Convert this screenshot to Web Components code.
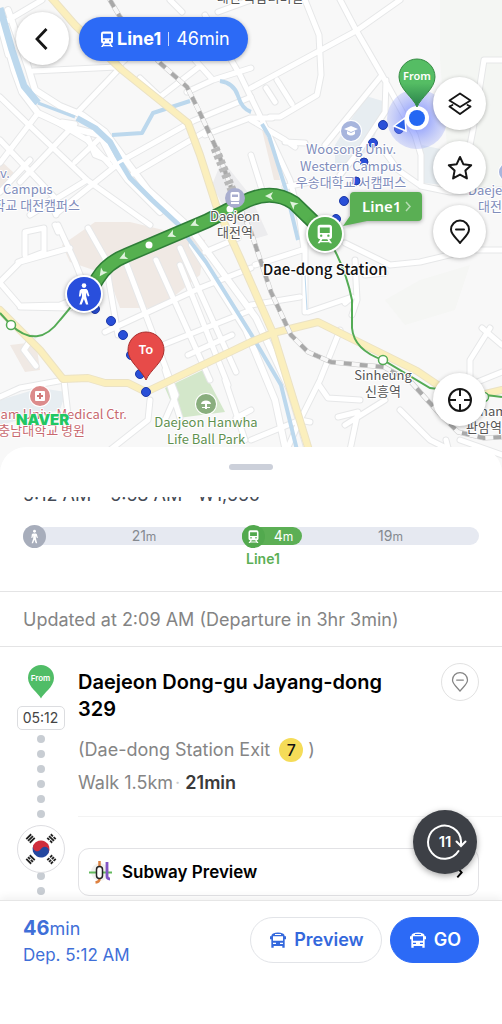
<!DOCTYPE html>
<html lang="en">
<head>
<meta charset="utf-8">
<meta name="viewport" content="width=device-width, initial-scale=1">
<title>Route to destination</title>
<style>
  html, body { margin: 0; height: 100%; background: #fff; }
  body { font-family: Inter, "Noto Sans CJK KR", sans-serif; color: #000; }
</style>
</head>
<body>
<transit-app></transit-app>
<script>
const define = (name, html, setup) => {
  const template = document.createElement('template');
  template.innerHTML = html;
  customElements.define(name, class extends HTMLElement {
    connectedCallback() {
      if (this.shadowRoot) return;
      this.attachShadow({ mode: 'open' }).append(template.content.cloneNode(true));
      if (setup) setup(this, this.shadowRoot);
    }
  });
};

const ICONS = {
  back: '<path d="M15.500 2 6 12l9.500 10" fill="none" stroke="currentColor" stroke-width="2.800"/>',
  layers: '<g fill="none" stroke="currentColor" stroke-width="1.900" stroke-linejoin="round" stroke-linecap="round"><path d="M12 1.500 22.500 8.500 12 15 1.500 8.500Z"/><path d="m1.500 14.500 3-1.500M22.500 14.500l-3-1.500M1.500 14.500 12 22l10.500-7.500"/></g>',
  star: '<path d="m12 1 3.300 7.200 7.900 1-5.800 5.400 1.500 7.800-6.900-3.800-6.900 3.800 1.500-7.800L.8 9.200l7.900-1Z" fill="none" stroke="currentColor" stroke-width="2" stroke-linejoin="round"/>',
  pin: '<path d="M12 23C9.500 19 3 14.800 3 9.600a9 9 0 0 1 18 0c0 5.200-6.500 9.400-9 13.400ZM8 9.600h8" fill="none" stroke="currentColor" stroke-width="var(--line, 2)" stroke-linejoin="round" stroke-linecap="round"/>',
  target: '<g fill="none" stroke="currentColor" stroke-width="2"><circle cx="12" cy="12" r="11"/><path d="M12 1v7M12 16v7M1 12h7M16 12h7"/></g>',
  walk: '<g fill="currentColor"><circle cx="12" cy="3.600" r="2.300"/><path d="M9.300 7h5.200l1.300 1.500 1.600 5.400-1.500.7-1.700-4v4l2.100 8H14L11.900 17l-2.200 5.600H7.400L9.900 15v-4.500L8.500 14.500H6.900l.8-6Z"/></g>',
  train: '<path fill="currentColor" fill-rule="evenodd" d="M7 2h10a3 3 0 0 1 3 3v10a3 3 0 0 1-3 3H7a3 3 0 0 1-3-3V5a3 3 0 0 1 3-3Zm-.5 3v6h11V5Zm1.500 7.800a1.300 1.300 0 1 0 0 2.600 1.300 1.300 0 0 0 0-2.600Zm8 0a1.300 1.300 0 1 0 0 2.600 1.300 1.300 0 0 0 0-2.600ZM7 18h2.200l-1 2h7.600l-1-2H17l3 4.500h-2.400l-.7-1H7.100l-.7 1H4Z"/>',
  bus: '<path fill="currentColor" fill-rule="evenodd" d="M4 2.500Q12-1 20 2.500Q22 3.500 22 6.500H24V11H22V23.500H18.500V21H5.500V23.500H2V11H0V6.500H2Q2 3.500 4 2.500ZM4.500 6.500V13H19.500V6.500ZM4.500 16V18H9V16ZM15 16V18H19.500V16ZM7.500 3V4.500H16.500V3Z"/>',
  chevron: '<path d="m8 3 8 9-8 9" fill="none" stroke="currentColor" stroke-width="3.500"/>',
  from: '<path fill="#50bd67" d="M12 31C10 26 0 20.500 0 12a12 12 0 0 1 24 0c0 8.500-10 14-12 19Z"/>',
  subway: '<circle cx="11" cy="12" r="9" fill="#f1f1ee"/><path d="M0 12.500h23" stroke="#62b95c" stroke-width="2"/><path d="M10.500 1v18q0 3-4 3.500" fill="none" stroke="#dd8140" stroke-width="2.500"/><path d="M18 2v14q0 3 3 3" fill="none" stroke="#8256c5" stroke-width="2.800"/><rect x="7.500" y="6.500" width="6" height="12" rx="3" fill="#fff" stroke="#222" stroke-width="1.500"/>',
  flag: '<g transform="rotate(28 12 12)"><path d="M3.500 12a8.500 8.500 0 0 1 17 0Z" fill="#d02d3c"/><path d="M3.500 12a8.500 8.500 0 0 0 17 0Z" fill="#24479f"/><circle cx="7.750" cy="12" r="4.250" fill="#d02d3c"/><circle cx="16.250" cy="12" r="4.250" fill="#24479f"/></g>',
};

define('app-icon', `
<style>:host{display:inline-block;width:24px;height:24px;flex:none}svg{display:block;width:100%;height:100%;overflow:visible}</style>
<svg viewBox="0 0 24 24" aria-hidden="true"></svg>`, (host, root) => {
  root.querySelector('svg').innerHTML = ICONS[host.getAttribute('name')];
});

define('round-button', `
<style>
:host{display:block;--size:53px}
button{width:var(--size);height:var(--size);padding:0;border:var(--edge,0);border-radius:50%;background:#fff;color:var(--ink,#161616);display:grid;place-items:center;box-shadow:var(--shade,0 1px 4px rgba(0,0,0,.28))}
</style>
<button type="button"><slot></slot></button>`, (host, root) => {
  root.querySelector('button').setAttribute('aria-label', host.getAttribute('label'));
});

define('trip-pill', `
<style>
:host{display:block}
button{height:44px;padding:0 18px;border:0;border-radius:22px;background:#2c6af6;color:#fff;font:18px/24px Inter,sans-serif;display:flex;align-items:center;box-shadow:0 1px 4px rgba(0,0,0,.3)}
app-icon{width:20px;height:18px}
b{font-weight:700}
i{width:1px;height:14px;background:#c9d9ff;margin:0 7px}
</style>
<button type="button"><app-icon name="train"></app-icon><b><slot name="line"></slot></b><i></i><slot></slot></button>`);

define('city-map', `
<style>
:host{display:block;overflow:hidden;background:#f8f8f8}
svg{display:block;width:100%;height:100%}
text{font-family:"Noto Sans CJK KR",sans-serif}
.road use{fill:none;stroke-linejoin:round;stroke-linecap:round}
.case{stroke:#e6e7e8;stroke-width:7px}
.fill{stroke:#fff;stroke-width:5px}
.label{font-size:13px;stroke:#fff;stroke-width:2px;paint-order:stroke;stroke-linejoin:round;text-anchor:middle}
.school{fill:#7f8dbb}.plain{fill:#555}.park{fill:#5f9150}.health{fill:#c8696f}
</style>
<svg viewBox="0 0 502 475" preserveAspectRatio="xMidYMin slice" role="img" aria-label="Map of Daejeon">
<defs>
 <linearGradient id="pinGreen" x2="0" y2="1"><stop offset=".5" stop-color="#55bd64"/><stop offset="1" stop-color="#28804a"/></linearGradient>
 <radialGradient id="halo"><stop offset=".3" stop-color="#5b72ff" stop-opacity=".6"/><stop offset="1" stop-color="#8595f5" stop-opacity=".28"/></radialGradient>
 <g id="streets">
  <path d="M0 25 42 0M0 25 8 55M33 71 117 67 160 28M77 113 118 70M0 97 30 126 87 180 150 225M0 163 38 113M20 182 75 124 62 122M0 192 30 160M57 213 123 160 193 121 251 97M57 122 87 140 110 165M100 138 75 162M133 174 208 130M30 215 87 180M140 78 160 97 200 66M187 92 213 80 251 68M195 60 213 80M0 140 57 200 50 208"/>
  <path d="M205 15 240 75 262 120 290 180 300 220 304 250M218 12 251 0M170 0 182 12M205 135 250 118 272 118M88 138 95 155 108 160M50 200 56 215"/>
  <path d="M0 282 20 262 70 248M25 255 25 232 44 228 44 252 18 262M0 283 20 306 60 305 92 292M20 307 70 308M55 225 58 232M58 225 75 262 88 295M88 228 105 258 118 335M125 260 176 395 165 420M156 260 210 380M180 265 228 385M180 248 236 372M105 332 200 288 251 268M150 350 251 310M188 355 232 335M165 370 180 418M110 450 148 420 150 400M0 397 20 388 64 380 68 415M225 380 245 440M236 418 251 410M205 252 238 238M24 350 36 366M24 350 32 338"/>
  <path d="M305 0 319 35 321 75 317 95 280 117 270 117M335-10 356 30 382 75 415 135 421 155 421 186M400 0 356 31 251 88M382 75 325 145M386 80 385 112 360 150 340 175M266 88 275 102M277 80 292 104M421 186 450 192 502 190M421 186 398 170 385 152M484 60 473 130 466 165M484 60H502M251 120 285 140 295 147M285 142 305 143M251 155 262 190M285 187 310 182"/>
  <path d="M345 243 390 265 420 262 470 250 502 250M305 225V312M255 265 302 250M251 305 300 297M365 275 385 273M308 312 352 297 345 303M340 330 320 380 300 420 288 447M319 385 328 398 360 400M385 400 345 425M338 417 358 412 350 450M400 410 430 440 450 450M251 440 300 420M300 420 310 422M502 372 470 385 470 360 490 328M482 328 502 345M446 440 455 475M460 440 502 455M355 260 357 300 352 315"/>
 </g>
 <path id="riverside" d="M0 18 14 70 22 92 38 113 68 127 100 135 112 158 128 180 160 212M8 10 28 67 35 90 60 106 82 115 105 132 124 158 148 190 190 228 256 318 290 390 307 447M192 245 246 330 275 400 285 447"/>
 <path id="rail" d="M110 0 120 17 160 63 187 87 200 113 217 150 232 190 251 232 271 292 291 335 308 352 331 362 361 365 384 367 411 382 438 412 458 432 484 438 502 437"/>
 <path id="yellow" d="M48-6 75 25 122 70 188 123 200 155 216 205 240 258 262 308 273 333 312 460M0 310 40 350 63 379 88 378 105 383 128 383 146 392 251 342 273 333 318 322 417 371 460 400 502 390"/>
 <path id="route" d="M88 294 98 278Q107 263 127 255L207 221 240 204Q270 187 294 203L325 233"/>
 <path id="arrow" d="M-4 0 4-4 2 0 4 4Z"/>
</defs>
<rect width="502" height="475" fill="#f8f8f8"/>
<g fill="#f0e9e4"><path d="M62 245 95 222 130 222 205 240 200 275 160 308 120 308 108 275 70 262ZM10 345 36 342 40 370 25 372ZM0 160 14 173 0 190ZM262 130 270 130 280 180 274 180Z"/></g>
<g fill="#e7edf1"><path d="M335 145 366 96 386 102 370 150 335 170ZM0 400 40 388 66 392 60 410 0 425ZM422 145 445 150 445 185 423 183Z"/></g>
<path d="M440 0H502V190L450 185 440 60Z" fill="#f4f6f3"/><path d="M385 300 420 280 470 265 455 310 405 325Z" fill="#f5f6f4"/>
<path d="M165 388 203 370 225 412 178 418Z" fill="#d3e7ca"/>
<path d="M212 185 222 160 250 195 268 235 251 240 225 210Z" fill="#ececee"/>
<g class="road"><use href="#streets" class="case"/><use href="#riverside" style="stroke:#e6e7e8;stroke-width:8px"/><use href="#streets" class="fill"/><use href="#riverside" style="stroke:#fff;stroke-width:6px"/></g>
<g fill="none" stroke="#bcd8ed" stroke-linejoin="round">
 <path d="M0 8 12 50 24 86 38 103" stroke-width="7"/><path d="M38 103 75 117" stroke-width="3"/><path d="M77 118 95 128 110 142 120 160" stroke-width="6"/><path d="M121 163 130 178 152 200 180 226" stroke-width="5"/><path d="M187 237 206 262 251 334 281 385 297 450" stroke-width="4"/>
 <path d="M112 135 142 133 153 113 190 101M220 81Q234 83 238 96T251 112M262 124 269 136 286 190 298 240" stroke-width="4"/>
 <path d="M305 275 307 310M387 358Q405 358 415 370" stroke-width="1"/>
</g>
<g class="road"><use href="#yellow" style="stroke:#ebe2c4;stroke-width:8px"/><use href="#yellow" style="stroke:#fbefbd;stroke-width:6px"/></g>
<g class="road"><use href="#rail" style="stroke:#c7c7c7;stroke-width:5px"/><use href="#rail" style="stroke:#f8f8f8;stroke-width:4px"/><use href="#rail" style="stroke:#a9a9a9;stroke-width:4px;stroke-dasharray:8 8;stroke-linecap:butt"/><path d="M215 148 232 190" stroke="#b8b8b8" stroke-width="9" stroke-dasharray="4 3"/></g>
<g fill="none" stroke="#54ab55" stroke-width="2"><path d="M325 233Q345 265 352 300V328Q354 350 383 360L430 388 502 397M85 290 60 320Q38 350 11 325L0 313"/></g>
<g fill="#294fd8" stroke="#1d39a8"><circle cx="383" cy="125" r="4.500"/><circle cx="399" cy="129" r="4.500"/><circle cx="373" cy="143" r="4.500"/><circle cx="364" cy="162" r="4"/><circle cx="356" cy="181" r="4"/><circle cx="344" cy="201" r="4.500"/><circle cx="336" cy="219" r="4.500"/><circle cx="95" cy="309" r="4.500"/><circle cx="111" cy="321" r="4.500"/><circle cx="123" cy="335" r="4.500"/><circle cx="131" cy="355" r="4.500"/><circle cx="140" cy="374" r="4.500"/><circle cx="146" cy="392" r="4.500"/></g>
<g class="label school"><text x="0" y="178" style="text-anchor:start">v.</text><text x="3" y="194" style="text-anchor:start">Campus</text><text x="80" y="210" style="text-anchor:end">학교 대전캠퍼스</text>
 <circle cx="351" cy="131" r="10" fill="#a7b5dd"/><path d="m351 126 7 3-7 3-7-3Zm-4 5v3q4 3 8 0v-3l-4 2Z" fill="#fff" stroke="none"/>
 <text x="351" y="154">Woosong Univ.</text><text x="351" y="171">Western Campus</text><text x="351" y="187">우송대학교 서캠퍼스</text>
 <circle cx="508" cy="172" r="9" fill="#a7b5dd"/><text x="468" y="195" style="text-anchor:start">Daejeon</text><text x="478" y="211" style="text-anchor:start">대전대</text></g>
<text class="label plain" x="260" y="2">대전 복합터미널</text>
<g class="label plain"><text x="383" y="380">Sinheung</text><text x="383" y="396">신흥역</text><text x="480" y="416" style="text-anchor:start">nam</text><text x="466" y="432" style="text-anchor:start">판암역</text></g>
<g class="label park"><circle cx="206" cy="404" r="10" fill="#89ae7e"/><path d="M201 404a5 3.500 0 0 1 10 0ZM205 404h2v5h-2ZM202 407h8v1h-8Z" fill="#fff" stroke="none"/><text x="206" y="427">Daejeon Hanwha</text><text x="206" y="444">Life Ball Park</text></g>
<g class="label health"><circle cx="40" cy="396" r="10" fill="#dc8b8b"/><rect x="35" y="391" width="10" height="10" rx="1" fill="#fff" stroke="none"/><path d="M40 393v6M37 396h6" stroke="#d07878" stroke-width="2"/><text x="127" y="419" style="text-anchor:end">nam Univ. Medical Ctr.</text><text x="85" y="435" style="text-anchor:end">충남대학교 병원</text></g>
<text x="16" y="425" fill="#21c763" stroke="#fff" stroke-width="1" paint-order="stroke" style="font:900 15px Inter,sans-serif">NAVER</text>
<g class="road"><use href="#route" style="stroke:#2f7e38;stroke-width:15px;stroke-linecap:butt"/><use href="#route" style="stroke:#55b04f;stroke-width:12px;stroke-linecap:butt"/></g>
<g fill="#dff3dc"><use href="#arrow" transform="translate(102 273) rotate(-55)"/><use href="#arrow" transform="translate(123 257) rotate(-24)"/><use href="#arrow" transform="translate(171 235) rotate(-24)"/><use href="#arrow" transform="translate(194 224) rotate(-24)"/><use href="#arrow" transform="translate(269 196)"/><use href="#arrow" transform="translate(293 204) rotate(40)"/><circle cx="149" cy="245" r="3.500" fill="#fff"/><circle cx="230" cy="209" r="3.500" fill="#fff"/></g>
<circle cx="235" cy="198" r="10" fill="#a9aecf"/><path d="M232 192h6q1.500 0 1.500 1.500v6q0 1.500-1.500 1.500h-6q-1.500 0-1.500-1.500v-6q0-1.500 1.500-1.500Zm0 2.500v2.500h6v-2.500ZM231 202h8v2h-8Z" fill="#fff" fill-rule="evenodd"/>
<g class="label plain"><text x="235" y="221">Daejeon</text><text x="235" y="237">대전역</text></g>
<g fill="#fff" stroke="#54ab55" stroke-width="1.500"><circle cx="11" cy="325" r="4.500"/><circle cx="383" cy="360" r="4.500"/><circle cx="484" cy="397" r="4.500"/></g>
<circle cx="417" cy="119" r="30" fill="url(#halo)"/><circle cx="417" cy="118" r="12" fill="#fff"/><circle cx="417" cy="118" r="8" fill="#2467f3"/><path d="m394 126 11-8 1 13Z" fill="#2b62e8" stroke="#fff" stroke-width="1.500"/>
<path d="M417 107C413 97 399 89 399 77a18 18 0 0 1 36 0c0 12-14 20-18 30Z" fill="url(#pinGreen)" stroke="#378c45"/>
<text x="417" y="80" fill="#fff" text-anchor="middle" style="font:600 11px 'Noto Sans',sans-serif">From</text>
<path d="M146 380C142 370 128 362 128 350a18 18 0 0 1 36 0c0 12-14 20-18 30Z" fill="#e74b49" stroke="#a9302f"/>
<text x="146" y="354" fill="#fff" text-anchor="middle" style="font:600 13px 'Noto Sans',sans-serif">To</text>
<g style="filter:drop-shadow(0 1px 2px rgba(0,0,0,.35))"><circle cx="84" cy="294" r="19" fill="#fff"/><circle cx="325" cy="234" r="19" fill="#fff"/><path d="M354 192h64q4 0 4 4v21q0 4-4 4h-51l-24 5 7-10v-20q0-4 4-4Z" fill="#5aaf54"/></g>
<circle cx="84" cy="294" r="17" fill="#294fdc"/><circle cx="325" cy="234" r="17" fill="#55ae50"/>
<g id="walker" transform="translate(72 282)" color="#fff"></g><g id="train" transform="translate(314 223) scale(.9)" color="#fff"></g>
<text x="362" y="212" fill="#fff" style="font:600 15px 'Noto Sans',sans-serif">Line1</text><path d="m406 202 4 4.500-4 4.500" fill="none" stroke="#b6dcb3" stroke-width="1.500"/>
<text x="325" y="275" text-anchor="middle" fill="#111" stroke="#fff" stroke-width="2" paint-order="stroke" style="font-size:15px;font-weight:500">Dae-dong Station</text>
</svg>`, (host, root) => {
  root.getElementById('walker').innerHTML = ICONS.walk;
  root.getElementById('train').innerHTML = ICONS.train;
});

define('route-bar', `
<style>
:host{display:block}
.track{display:grid;grid-template-columns:219fr 60fr 177fr;height:18px;border-radius:9px;background:#e6e9f1;color:#858990;font-size:14px;line-height:18px}
.leg{display:flex;align-items:center;position:relative;height:18px}
.leg p{flex:1;margin:0;text-align:center}
small{font-size:12px}
.dot{width:23px;height:23px;border-radius:50%;background:#a7adbb;color:#fff;display:grid;place-items:center}
.dot app-icon{width:15px;height:15px}
.ride{background:#5caf55;color:#fff;border-radius:9px}
.ride .dot{background:#52a94e}
.ride b{position:absolute;top:23px;left:4px;color:#5caf55;font-weight:600}
</style>
<div class="track">
 <div class="leg"><span class="dot"><app-icon name="walk"></app-icon></span><p>21<small>m</small></p></div>
 <div class="leg ride"><span class="dot"><app-icon name="train"></app-icon></span><p>4<small>m</small></p><b>Line1</b></div>
 <div class="leg"><p>19<small>m</small></p></div>
</div>`);

define('route-summary', `
<style>
:host{display:flow-root;padding:0 23px;height:94px;border-bottom:1px solid #e4e4e5}
.times{margin:-12px 0 22px;font-size:18px;line-height:20px;color:#444a55}
</style>
<p class="times"><slot></slot></p><route-bar></route-bar>`);

define('update-note', `
<style>:host{display:block;padding:16px 23px 14px;border-bottom:1px solid #e4e4e5;color:#848484;font-size:18px;line-height:24px}</style><slot></slot>`);

define('trip-timeline', `
<style>
:host{display:flex;flex-direction:column;align-items:center;width:47px;flex:none}
.pin{position:relative;width:26px;height:34px}
.pin app-icon{width:26px;height:26px}
.pin span{position:absolute;inset:0;text-align:center;color:#fff;font-size:8px;line-height:27px;font-weight:600}
time{box-sizing:border-box;width:48px;margin-top:7px;border:1px solid #dcdde0;border-radius:5px;text-align:center;font-size:14px;line-height:22px;color:#444}
i{width:8px;height:8px;border-radius:50%;background:#c8cdd3;margin-top:7px}
i:first-of-type{margin-top:5px}
i.tight{margin-top:-1px}
.flag{box-sizing:border-box;width:48px;height:48px;margin-top:7px;border:1px solid #dedee2;border-radius:50%;background:#fff;z-index:1}
.flag svg{display:block}
</style>
<div class="pin"><app-icon name="from"></app-icon><span>From</span></div>
<time>05:12</time><i></i><i></i><i></i><i></i><i></i><i></i>
<div class="flag"><svg width="46" height="46" viewBox="0 0 46 46" role="img" aria-label="Korea"><g id="taeguk" transform="translate(11 11)"></g>
<g stroke="#222" stroke-width="1.800"><g transform="rotate(-45 12.500 12.500)"><path d="M9 10h7M9 12.500h7M9 15h7"/></g><g transform="rotate(45 33.500 12.500)"><path d="M30 10h3m1 0h3M30 12.500h7M30 15h3m1 0h3"/></g><g transform="rotate(45 12.500 33.500)"><path d="M9 31h7M9 33.500h3m1 0h3M9 36h7"/></g><g transform="rotate(-45 33.500 33.500)"><path d="M30 31h3m1 0h3M30 33.500h3m1 0h3M30 36h3m1 0h3"/></g></g></svg></div>
<i class="tight"></i><i></i><i></i>`, (host, root) => {
  root.getElementById('taeguk').innerHTML = ICONS.flag;
});

define('trip-step', `
<style>
:host{display:flex;padding:18px 0 0 17px}
.main{flex:1;min-width:0;margin-left:14px}
.head{display:flex;align-items:flex-start;margin-top:4px;padding-right:23px}
h2{flex:1;margin:0;font-size:20px;line-height:27px;font-weight:600}
round-button{--size:38px;--edge:1px solid #e2e2e2;--shade:none;--ink:#858585;--line:1.500;margin:-6px 0 0 20px}
round-button app-icon{width:20px;height:20px}
p{margin:0;font-size:18px;line-height:24px;color:#858585}
.exit{display:flex;align-items:center;margin-top:15px}
.exit b{width:24px;margin:0 5px 0 9px;border-radius:50%;background:#f5dc58;color:#111;text-align:center;font-size:16px;font-weight:500}
.walk{margin-top:9px;padding-bottom:21px;border-bottom:1px solid #f3f3f3}
.walk b{font-weight:600;color:#3a3a3a}
.walk i{color:#ccc;font-style:normal;margin-left:2px}
.preview{box-sizing:border-box;display:flex;align-items:center;width:calc(100% - 23px);height:48px;margin-top:31px;padding:0 12px 0 10px;border:1px solid #e2e2e5;border-radius:11px;background:#fff;font:600 17px/24px Inter,sans-serif;color:#000;text-align:left}
.preview span{flex:1;margin-left:9px}
.preview app-icon:last-child{width:13px;height:13px}
</style>
<trip-timeline></trip-timeline>
<div class="main">
 <div class="head"><h2><slot></slot></h2><round-button label="Street view"><app-icon name="pin"></app-icon></round-button></div>
 <p class="exit">(Dae-dong Station Exit <b>7</b>)</p>
 <p class="walk">Walk 1.5km<i>·</i> <b>21min</b></p>
 <button class="preview" type="button"><app-icon name="subway"></app-icon><span>Subway Preview</span><app-icon name="chevron"></app-icon></button>
</div>`);

define('refresh-button', `
<style>
:host{display:block}
button{position:relative;width:64px;height:64px;padding:0;border:0;border-radius:50%;background:#3d4046;color:#fff;box-shadow:0 2px 6px rgba(0,0,0,.35);font:600 15px/64px Inter,sans-serif}
svg{position:absolute;inset:0}
</style>
<button type="button" aria-label="Refresh in 11 seconds"><svg viewBox="0 0 64 64" fill="none" stroke="#fff" stroke-width="2" stroke-linecap="round" aria-hidden="true"><path d="M45.500 41A16.500 16.500 0 1 1 48 31V35M43.500 31.500l4.500 4.500 4.500-4.500"/></svg>11</button>`);

define('pill-button', `
<style>
:host{display:block}
button{height:46px;padding:0 17px 0 19px;border:1px solid #e2e4e8;border-radius:23px;background:#fff;color:#3468dc;display:flex;align-items:center;gap:8px;font:600 18px/24px Inter,sans-serif}
:host([primary]) button{background:#2c6af6;border-color:#2c6af6;color:#fff}
app-icon{width:16px;height:16px}
</style>
<button type="button"><app-icon name="bus"></app-icon><slot></slot></button>`);

define('trip-footer', `
<style>
:host{box-sizing:border-box;display:flex;gap:8px;height:124px;flex:none;padding:16px 23px 0;background:#fff;border-top:1px solid #e6e6e6;box-shadow:0 -3px 8px rgba(0,0,0,.06);color:#3f6fd8;position:relative}
div{flex:1;margin-top:-2px}
p{margin:0;font-size:17px;line-height:26px}
.total{font-size:18px}
b{font-size:20px;font-weight:700}
</style>
<div><p class="total"><b>46</b>min</p><p>Dep. 5:12 AM</p></div>
<pill-button>Preview</pill-button><pill-button primary>GO</pill-button>`);

define('transit-app', `
<style>
:host{display:flex;flex-direction:column;height:100%;position:relative;overflow:hidden}
city-map{height:475px;flex:none}
.top{position:absolute;top:12px;left:16px;display:flex;align-items:center;gap:10px}
.tools{position:absolute;top:77px;right:16px;display:grid;gap:11px}
.locate{position:absolute;top:373px;right:16px}
.sheet{position:relative;flex:1;min-height:0;display:flex;flex-direction:column;margin-top:-28px;border-radius:26px 26px 0 0;background:#fff}
.grip{width:44px;height:6px;margin:17px auto 27px;border-radius:3px;background:#ccd0da;flex:none}
.scroll{flex:1;min-height:0;overflow:hidden}
refresh-button{position:absolute;right:25px;bottom:150px}
</style>
<city-map></city-map>
<div class="top"><round-button label="Back"><app-icon name="back"></app-icon></round-button><trip-pill><span slot="line">Line1</span>46min</trip-pill></div>
<div class="tools"><round-button label="Layers"><app-icon name="layers"></app-icon></round-button><round-button label="Favorite"><app-icon name="star"></app-icon></round-button><round-button label="Street view"><app-icon name="pin"></app-icon></round-button></div>
<round-button class="locate" label="My location"><app-icon name="target"></app-icon></round-button>
<section class="sheet">
 <div class="grip"></div>
 <div class="scroll">
  <route-summary>5:12 AM – 5:58 AM · ₩1,550</route-summary>
  <update-note>Updated at 2:09 AM (Departure in 3hr 3min)</update-note>
  <trip-step>Daejeon Dong-gu Jayang-dong 329</trip-step>
 </div>
 <trip-footer></trip-footer>
</section>
<refresh-button></refresh-button>`);
</script>
</body>
</html>
